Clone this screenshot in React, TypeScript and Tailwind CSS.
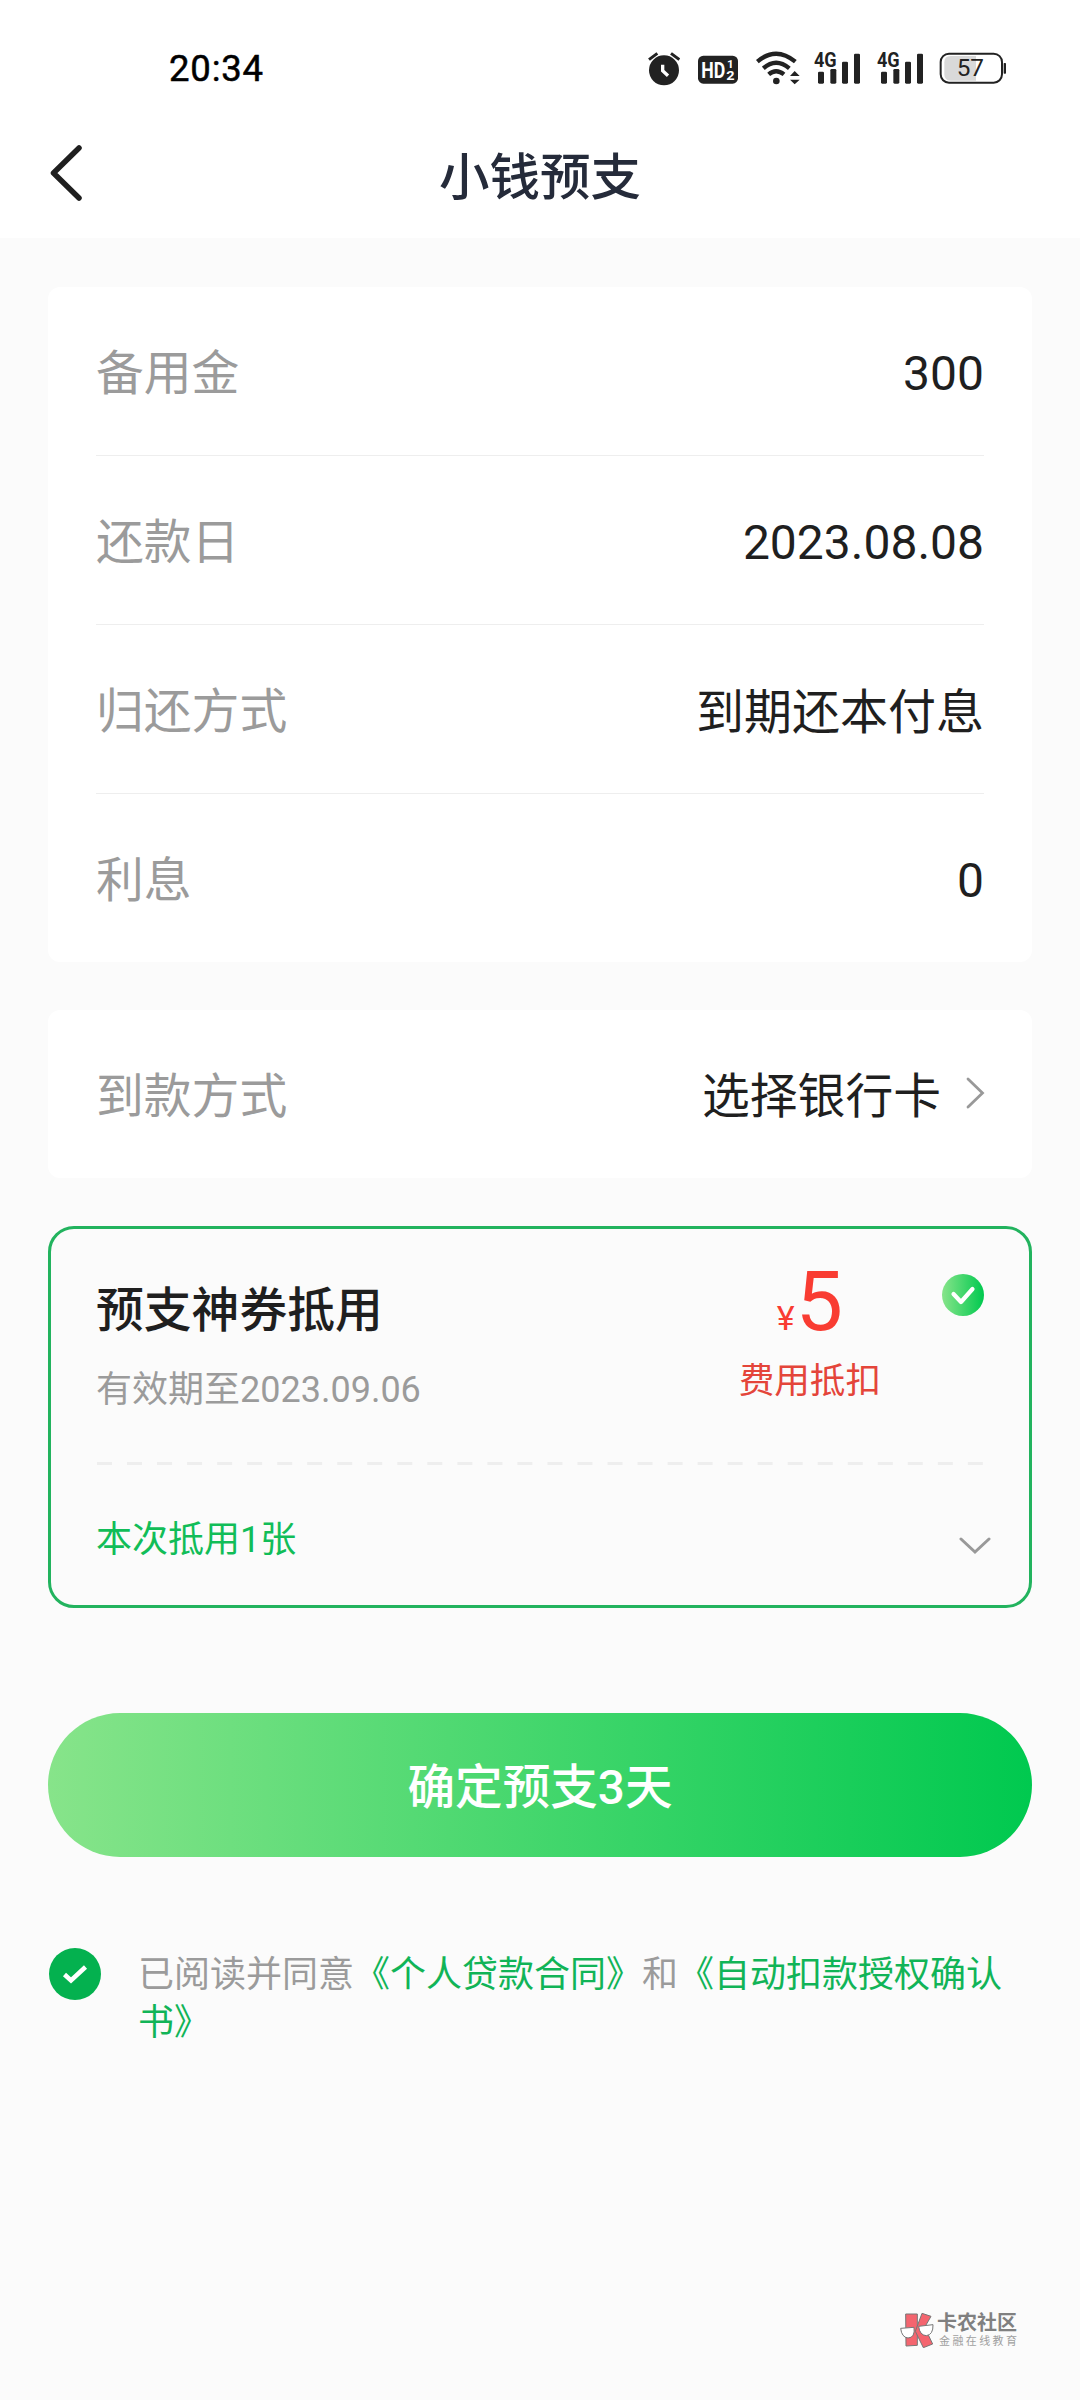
import type { ReactNode } from "react"

interface RowProps {
  label: string
  children: ReactNode
  divider?: boolean
}

function AlarmIcon() {
  return (
    <svg width="32" height="36" viewBox="54 34 96 108" fill="none">
      <circle cx="102" cy="92" r="45" fill="#222" />
      <path d="M57 60 L82 41 M123 41 L148 60" stroke="#222" strokeWidth="9" />
      <path d="M98 75 V93 L114 108" stroke="#fff" strokeWidth="10" />
    </svg>
  )
}

function HdIcon() {
  return (
    <svg width="40" height="36" viewBox="204 34 120 108" fontFamily="Roboto, sans-serif" fill="#fff">
      <rect x="204" y="48" width="120" height="84" rx="16" fill="#222" />
      <text x="214" y="114" fontSize="66" fontWeight="700" textLength="72" lengthAdjust="spacingAndGlyphs">HD</text>
      <text x="291" y="86" fontSize="35" fontWeight="700" textLength="20">1</text>
      <text x="289" y="121" fontSize="38" fontWeight="700" textLength="25" lengthAdjust="spacingAndGlyphs">2</text>
    </svg>
  )
}

function WifiIcon() {
  return (
    <svg width="44" height="36" viewBox="379 34 132 108" fill="none">
      <path d="M383 66 Q439 18 497 66" stroke="#222" strokeWidth="13" />
      <path d="M401 86 Q439 53 479 86" stroke="#222" strokeWidth="13" />
      <path d="M417 104 Q439 85 463 104" stroke="#222" strokeWidth="13" />
      <circle cx="440" cy="124" r="10" fill="#222" />
      <path d="M481 109 L495 94 L510 109 Z M481 120 H510 L495 134 Z" fill="#222" />
    </svg>
  )
}

function SignalIcon() {
  return (
    <svg className="overflow-visible" width="47" height="44" viewBox="551 22 141 132" fill="#222">
      <text x="551" y="81" fontFamily="Roboto, sans-serif" fontSize="60" fontWeight="700" textLength="68" lengthAdjust="spacingAndGlyphs">4G</text>
      <rect x="563" y="96" width="18" height="36" rx="4" />
      <rect x="600" y="88" width="18" height="44" rx="4" />
      <rect x="635" y="66" width="18" height="66" rx="4" />
      <rect x="671" y="42" width="18" height="90" rx="4" />
    </svg>
  )
}

function BatteryIcon() {
  return (
    <svg width="68" height="36" viewBox="925 34 204 108" fill="none">
      <path d="M960 49 H1036 V123 H960 Q941 123 941 104 V68 Q941 49 960 49 Z" fill="#d9d9d9" />
      <rect x="930" y="42" width="184" height="87" rx="25" stroke="#222" strokeWidth="6" />
      <rect x="1119" y="70" width="7" height="32" rx="2" fill="#222" />
      <text x="978" y="110" fontFamily="Roboto, sans-serif" fontSize="70" fill="#222" textLength="82" lengthAdjust="spacingAndGlyphs">57</text>
    </svg>
  )
}

function StatusBar() {
  return (
    <div className="flex h-[138px] items-center justify-between pl-[169px] pr-[73px]">
      <span className="pt-px text-[36.5px] leading-none tracking-[0.8px] text-black [-webkit-text-stroke:0.5px_black]">20:34</span>
      <div className="flex items-center">
        <AlarmIcon />
        <div className="w-[18px]" />
        <HdIcon />
        <div className="w-[18px]" />
        <WifiIcon />
        <div className="w-[14px]" />
        <SignalIcon />
        <div className="w-4" />
        <SignalIcon />
        <div className="w-[15px]" />
        <BatteryIcon />
      </div>
    </div>
  )
}

function Row({ label, children, divider }: RowProps) {
  return (
    <div
      className={
        divider
          ? "flex h-[169px] items-center justify-between border-b border-[#eeeeee] text-[48px] leading-none"
          : "flex h-[168px] items-center justify-between text-[48px] leading-none"
      }
    >
      <span className="pt-[7px] text-[47.8px] text-[#9b9b9b]">{label}</span>
      <span className="flex items-center text-[#1f1f1f]">{children}</span>
    </div>
  )
}

function Coupon() {
  return (
    <section className="mt-12 h-[382px] rounded-[26px] border-[3px] border-[#22b35e] px-[45px]">
      <div className="flex h-[233px] items-start">
        <div className="pt-[58px]">
          <h2 className="text-[47.8px] font-medium leading-[48px] text-[#1f1f1f]">预支神券抵用</h2>
          <p className="mt-[37px] text-[36px] leading-[36px] text-[#9b9b9b]">有效期至2023.09.06</p>
        </div>
        <div className="ml-auto flex flex-col items-center pt-[31px]">
          <div className="flex items-baseline leading-[84px] text-[#f93c32]">
            <span className="text-[34px]">¥</span>
            <span className="ml-px text-[84px]">5</span>
          </div>
          <p className="mt-[3px] text-[35.6px] leading-[36px] text-[#e4453a]">费用抵扣</p>
        </div>
        <svg className="ml-[61px] mt-[45px]" width="42" height="42" viewBox="0 0 42 42" fill="none">
          <defs>
            <linearGradient id="couponCheck" x1="0" y1="0" x2="1" y2="0">
              <stop offset="0" stopColor="#87e48a" />
              <stop offset="1" stopColor="#00c94f" />
            </linearGradient>
          </defs>
          <circle cx="21" cy="21" r="21" fill="url(#couponCheck)" />
          <path d="M11.500 20 L19 28 L30.500 15" stroke="#fff" strokeWidth="4.200" strokeLinecap="round" strokeLinejoin="round" />
        </svg>
      </div>
      <svg className="block" width="888" height="3" viewBox="0 0 888 3">
        <path d="M1 1.5 H888" stroke="#eeeeee" strokeWidth="3" strokeDasharray="15 15.03" />
      </svg>
      <div className="flex h-[140px] items-center justify-between pt-[10px]">
        <span className="text-[36px] leading-none text-[#11bd58]">本次抵用1张</span>
        <svg className="-mr-[7px] mt-[12px]" width="32" height="20" viewBox="0 0 32 20" fill="none">
          <path d="M2 3 L16 16 L30 3" stroke="#999" strokeWidth="3" strokeLinecap="round" />
        </svg>
      </div>
    </section>
  )
}

function Watermark() {
  return (
    <div className="ml-auto mr-[60px] flex w-[120px] items-center">
      <svg width="34" height="36" viewBox="60 66 102 108" stroke="#777" strokeWidth="3">
        <path d="M77 72 H112 V166 L78 168 Z" fill="#f4656f" />
        <path d="M126 70 L153 79 L134 112 L158 162 L130 173 L106 124 Z" fill="#f4656f" />
        <path d="M62 115 L102 112 Q106 143 84 144 Q65 142 62 115 Z" fill="#fff" />
        <path d="M116 109 L159 104 Q160 134 139 137 Q119 136 116 109 Z" fill="#fff" />
      </svg>
      <div className="ml-[3px] whitespace-nowrap">
        <div className="text-[20px] font-bold leading-[20px] text-[#808080]">卡农社区</div>
        <div className="ml-0.5 mt-[3px] text-[11px] leading-[12px] tracking-[2.4px] text-[#a0a0a0]">金融在线教育</div>
      </div>
    </div>
  )
}

export default function App() {
  return (
    <div className="flex h-[2400px] w-[1080px] flex-col overflow-hidden bg-[#fbfbfb] font-['Roboto','Noto_Sans_CJK_SC',sans-serif]">
      <header className="h-[238px] shrink-0 bg-white">
        <StatusBar />
        <div className="grid h-[72px] grid-cols-[1fr_auto_1fr] items-center px-12">
          <svg width="36" height="60" viewBox="0 0 36 60" fill="none">
            <path d="M31 4 L5.5 29 L31 54" stroke="#1f1f1f" strokeWidth="5.5" strokeLinecap="round" strokeLinejoin="round" />
          </svg>
          <h1 className="pt-[8px] text-[50.5px] font-medium leading-none text-[#252b3a]">小钱预支</h1>
        </div>
      </header>

      <main className="flex grow flex-col px-12 pt-[49px]">
        <section className="rounded-xl bg-white px-12">
          <Row label="备用金" divider><span className="pt-[5px]">300</span></Row>
          <Row label="还款日" divider><span className="pt-[5px]">2023.08.08</span></Row>
          <Row label="归还方式" divider><span className="pt-[7px]">到期还本付息</span></Row>
          <Row label="利息"><span className="pt-[5px]">0</span></Row>
        </section>

        <section className="mt-12 rounded-xl bg-white px-12">
          <Row label="到款方式">
            <span className="pt-[7px] text-[47.8px]">选择银行卡</span>
            <svg className="-mr-px ml-[24px]" width="20" height="34" viewBox="0 0 20 34" fill="none">
              <path d="M3 2 L17.5 16 L3 30" stroke="#999" strokeWidth="2.8" strokeLinecap="round" />
            </svg>
          </Row>
        </section>

        <Coupon />

        <button className="mt-[105px] h-36 rounded-full bg-linear-to-r/srgb from-[#87e48a] to-[#00c94f] pt-[7px] text-[47.6px] font-medium leading-none text-white">
          确定预支3天
        </button>

        <div className="mt-[91px] flex items-start">
          <svg className="ml-px shrink-0" width="52" height="52" viewBox="0 0 52 52" fill="none">
            <circle cx="26" cy="26" r="26" fill="#04b14f" />
            <path d="M15.500 26.500 L22 32.500 L36.500 19" stroke="#fff" strokeWidth="4.500" />
          </svg>
          <p className="ml-[37px] mt-[3px] text-[36px] leading-[48px] text-[#9b9b9b]">
            已阅读并同意<span className="text-[#11b457]">《个人贷款合同》</span>和
            <span className="text-[#11b457]">《自动扣款授权确认书》</span>
          </p>
        </div>

        <div className="mb-[52px] mr-[-48px] mt-auto flex">
          <Watermark />
        </div>
      </main>
    </div>
  )
}
